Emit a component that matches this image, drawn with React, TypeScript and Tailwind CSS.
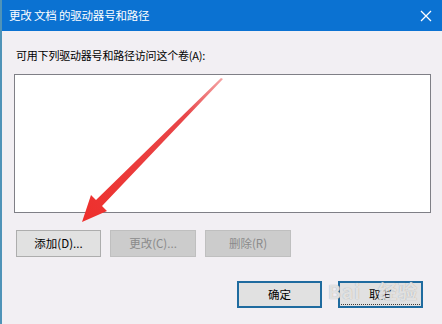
export default function App() {
  return (
    <div
      className="relative w-[442px] h-[324px] overflow-hidden bg-[#f2eff3] text-black flex flex-col border-l-2 border-[#4f93b8]"
      style={{ fontFamily: '"Noto Sans CJK SC", "Microsoft YaHei", sans-serif' }}
    >
      {/* Title bar */}
      <div className="flex h-[31px] shrink-0 items-center justify-between bg-[#0b72d2] pl-[7px] pr-[9px] text-white">
        <span className="text-[11.5px] leading-none tracking-[-0.2px]">更改 文档 的驱动器号和路径</span>
        <svg width="12" height="12" viewBox="0 0 12 12" className="mr-[1px]">
          <path d="M1 1 L11 11 M11 1 L1 11" stroke="currentColor" strokeWidth="1.3" />
        </svg>
      </div>

      {/* Body */}
      <div className="flex flex-col pl-[12px] pr-[11px]">
        <p className="mt-[16px] h-[16px] text-[11px] leading-[16px] pl-[2px] tracking-[-0.2px]">
          可用下列驱动器号和路径访问这个卷(A):
        </p>
        <div className="mt-[11px] h-[139px] bg-white border border-[#7f7f86]" />

        <div className="mt-[17px] flex gap-[9px] pl-[2px]">
          <button className="w-[85px] h-[27px] bg-[#e1e1e1] border border-[#adadad] text-[11.5px]">
            添加(D)...
          </button>
          <button className="w-[86px] h-[27px] bg-[#cccccc] border border-[#bfbfbf] text-[11.5px] text-[#8a8a8a]">
            更改(C)...
          </button>
          <button className="w-[86px] h-[27px] bg-[#cccccc] border border-[#bfbfbf] text-[11.5px] text-[#8a8a8a]">
            删除(R)
          </button>
        </div>

        <div className="mt-[24px] flex justify-end gap-[16px] pr-[8px]">
          <button className="w-[85px] h-[27px] bg-[#e1e1e1] border-2 border-[#1f6b9f] text-[11.5px]">
            确定
          </button>
          <button className="relative w-[85px] h-[27px] bg-[#e1e1e1] border-2 border-[#1f6b9f] text-[11.5px]">
            取消
            <span className="absolute left-[1px] right-[1px] bottom-[1px] border-b border-dotted border-[#3a3a3a]" />
          </button>
        </div>
      </div>

      {/* Watermark */}
      <div className="absolute left-[326px] top-[281px] text-[19px] font-bold leading-none text-white/70 tracking-[1px] [text-shadow:0_0_1px_#9a9a9a]">
        Bai<span className="text-[16px]">&#x2003;</span>经验
      </div>

      {/* Red arrow annotation */}
      <svg className="absolute left-0 top-0 pointer-events-none" width="442" height="324" viewBox="0 0 442 324">
        <defs>
          <linearGradient id="ar" x1="220" y1="79" x2="80" y2="222" gradientUnits="userSpaceOnUse">
            <stop offset="0" stopColor="#f4a3a3" />
            <stop offset="0.25" stopColor="#e8474a" />
            <stop offset="1" stopColor="#ee2f2c" />
          </linearGradient>
        </defs>
        <polygon
          points="221,79 100,206 105,211 80,222 89,195 94,200 219,78"
          fill="url(#ar)"
        />
      </svg>
    </div>
  );
}
